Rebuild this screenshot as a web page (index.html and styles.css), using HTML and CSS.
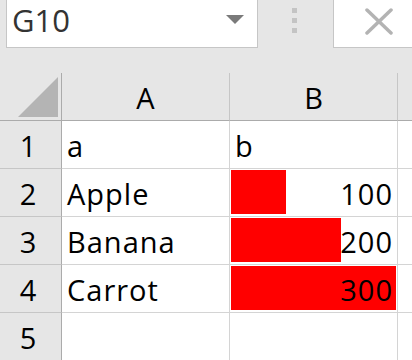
FILE: index.html
```html
<!DOCTYPE html>
<html lang="en">
<head>
    <meta charset="UTF-8">
    <meta name="viewport" content="width=device-width, initial-scale=1.0">
    <title>Sheet - Data Bars</title>
    <link rel="stylesheet" href="styles.css">
</head>
<body>
    <div class="formula-bar">
        <div class="name-box">
            <span class="name-text">G10</span>
            <span class="name-arrow"></span>
        </div>
        <div class="grip">
            <span></span><span></span><span></span>
        </div>
        <div class="cancel-box">
            <svg class="cancel-icon" width="28" height="27" viewBox="0 0 28 27">
                <line x1="2" y1="2" x2="26" y2="25" stroke="#b3b3b3" stroke-width="3.5" stroke-linecap="round"/>
                <line x1="26" y1="2" x2="2" y2="25" stroke="#b3b3b3" stroke-width="3.5" stroke-linecap="round"/>
            </svg>
        </div>
    </div>

    <div class="sheet">
        <div class="cell corner"><span class="corner-mark"></span></div>
        <div class="cell col-head">A</div>
        <div class="cell col-head">B</div>
        <div class="cell col-head filler"></div>

        <div class="cell row-head">1</div>
        <div class="cell">a</div>
        <div class="cell">b</div>
        <div class="cell filler"></div>

        <div class="cell row-head">2</div>
        <div class="cell">Apple</div>
        <div class="cell num">
            <div class="bar-track"><div class="bar" style="width: 33.333%"></div></div>
            <span class="num-text">100</span>
        </div>
        <div class="cell filler"></div>

        <div class="cell row-head">3</div>
        <div class="cell">Banana</div>
        <div class="cell num">
            <div class="bar-track"><div class="bar" style="width: 66.667%"></div></div>
            <span class="num-text">200</span>
        </div>
        <div class="cell filler"></div>

        <div class="cell row-head">4</div>
        <div class="cell">Carrot</div>
        <div class="cell num">
            <div class="bar-track"><div class="bar" style="width: 100%"></div></div>
            <span class="num-text">300</span>
        </div>
        <div class="cell filler"></div>

        <div class="cell row-head">5</div>
        <div class="cell"></div>
        <div class="cell"></div>
        <div class="cell filler"></div>
    </div>
</body>
</html>
```

FILE: styles.css
```css
* {
    margin: 0;
    padding: 0;
    box-sizing: border-box;
}

body {
    font-family: 'Open Sans', 'Liberation Sans', sans-serif;
    background: #e6e6e6;
    width: 412px;
    height: 360px;
    overflow: hidden;
}

/* Formula bar */
.formula-bar {
    display: flex;
    height: 48px;
}

.name-box {
    display: flex;
    align-items: flex-start;
    width: 252px;
    height: 48px;
    margin-left: 6px;
    padding-left: 5px;
    background: white;
    border: 1px solid #c6c6c6;
    border-top: none;
}

.name-text {
    font-size: 31px;
    line-height: 40px;
    color: #333333;
}

.name-arrow {
    margin-left: auto;
    margin-right: 13px;
    margin-top: 15px;
    width: 0;
    height: 0;
    border-left: 9px solid transparent;
    border-right: 9px solid transparent;
    border-top: 9px solid #7a7a7a;
}

.grip {
    display: flex;
    flex-direction: column;
    gap: 5px;
    margin-left: 34px;
    margin-top: 8px;
}

.grip span {
    width: 5px;
    height: 5px;
    background: #c4c4c4;
}

.cancel-box {
    flex: 1;
    height: 48px;
    margin-left: 36px;
    padding-left: 31px;
    padding-top: 8px;
    background: white;
    border-left: 1px solid #c6c6c6;
    border-bottom: 1px solid #c6c6c6;
}

.cancel-icon {
    display: block;
}

/* Grid */
.sheet {
    display: grid;
    grid-template-columns: 62px 168px 168px 1fr;
    grid-auto-rows: 48px;
    margin-top: 25px;
}

.cell {
    background: white;
    border-right: 1px solid #d4d4d4;
    border-bottom: 1px solid #d4d4d4;
    padding: 1px 0 0 5px;
    font-size: 29px;
    line-height: 47px;
    letter-spacing: 1px;
    color: black;
    white-space: nowrap;
    overflow: hidden;
}

.filler {
    border-right: none;
}

.corner {
    display: flex;
    justify-content: flex-end;
    align-items: flex-end;
    padding: 0 3px 3px 0;
    background: #e6e6e6;
    border-right-color: #ababab;
    border-bottom-color: #ababab;
}

.corner-mark {
    width: 40px;
    height: 40px;
    background: #b4b4b4;
    clip-path: polygon(100% 0, 100% 100%, 0 100%);
}

.col-head {
    background: #e6e6e6;
    text-align: center;
    padding-left: 0;
    letter-spacing: 0;
    border-right-color: #c6c6c6;
    border-bottom-color: #ababab;
}

.row-head {
    background: #e6e6e6;
    text-align: center;
    padding-left: 0;
    padding-right: 5px;
    letter-spacing: 0;
    border-right-color: #ababab;
    border-bottom-color: #c6c6c6;
}

.num {
    position: relative;
    text-align: right;
    padding-right: 4px;
}

.bar-track {
    position: absolute;
    left: 1px;
    right: 1px;
    top: 1px;
    bottom: 2px;
}

.bar {
    height: 100%;
    background: #ff0000;
}

.num-text {
    position: relative;
}
```
